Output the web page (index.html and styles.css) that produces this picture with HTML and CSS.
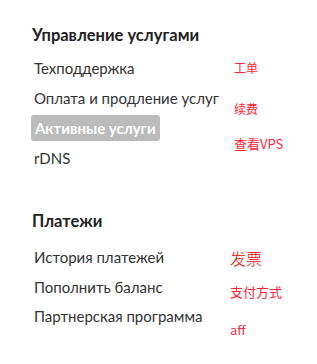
FILE: index.html
```html
<!DOCTYPE html>
<html lang="ru">
<head>
  <meta charset="UTF-8">
  <title>Меню</title>
  <link rel="stylesheet" href="styles.css">
</head>
<body>

<div class="container">
  <div class="section">
    <h2>Управление услугами</h2>
    <div class="section-body">
      <ul class="menu">
        <li>Техподдержка</li>
        <li>Оплата и продление услуг</li>
        <li><span class="active">Активные услуги</span></li>
        <li>rDNS</li>
      </ul>
      <div class="notes notes-top">
        <span class="note n1">工单</span>
        <span class="note n2">续费</span>
        <span class="note n3">查看VPS</span>
      </div>
    </div>
  </div>

  <div class="section second">
    <h2>Платежи</h2>
    <div class="section-body">
      <ul class="menu">
        <li>История платежей</li>
        <li>Пополнить баланс</li>
        <li>Партнерская программа</li>
      </ul>
      <div class="notes notes-bottom">
        <span class="note big">发票</span>
        <span class="note n5">支付方式</span>
        <span class="note n6">aff</span>
      </div>
    </div>
  </div>
</div>

</body>
</html>
```

FILE: styles.css
```css
body {
  margin: 0;
  background: #fff;
  font-family: Lato, "Noto Sans CJK SC", sans-serif;
}

.container {
  padding: 23px 0 0 32px;
}

.section h2 {
  margin: 0;
  font-size: 16.5px;
  line-height: 24px;
  font-weight: bold;
  color: #222;
}

.second {
  margin-top: 36px;
}

.section-body {
  display: flex;
}

.menu {
  list-style: none;
  margin: 6px 0 0 2px;
  padding: 0;
  width: 200px;
}

.menu li {
  font-size: 15px;
  line-height: 30px;
  height: 30px;
  color: #333;
}

.second .menu {
  margin-top: 9px;
}

.second .menu li {
  height: 29.5px;
}

.active {
  display: inline-block;
  margin-left: -3px;
  padding: 0 4px;
  line-height: 26px;
  border-radius: 3px;
  background: #bbb;
  color: #fff;
  font-weight: bold;
}

.notes {
  display: flex;
  flex-direction: column;
  align-items: flex-start;
  font-family: "Noto Sans CJK SC", sans-serif;
  color: #f23;
}

.note {
  font-size: 12px;
  line-height: 16px;
}

.notes-top {
  margin-top: 13px;
}

.n2 {
  margin-top: 25px;
}

.n3 {
  margin-top: 19px;
  font-size: 13px;
}

.notes-bottom {
  margin-left: -4px;
}

.big {
  margin-top: 15px;
  font-size: 16px;
  line-height: 20px;
  font-weight: 300;
  color: #e00;
}

.n5 {
  margin-top: 16px;
  font-size: 13px;
}

.n6 {
  margin-top: 22px;
  font-size: 13px;
  color: #e34;
}
```
